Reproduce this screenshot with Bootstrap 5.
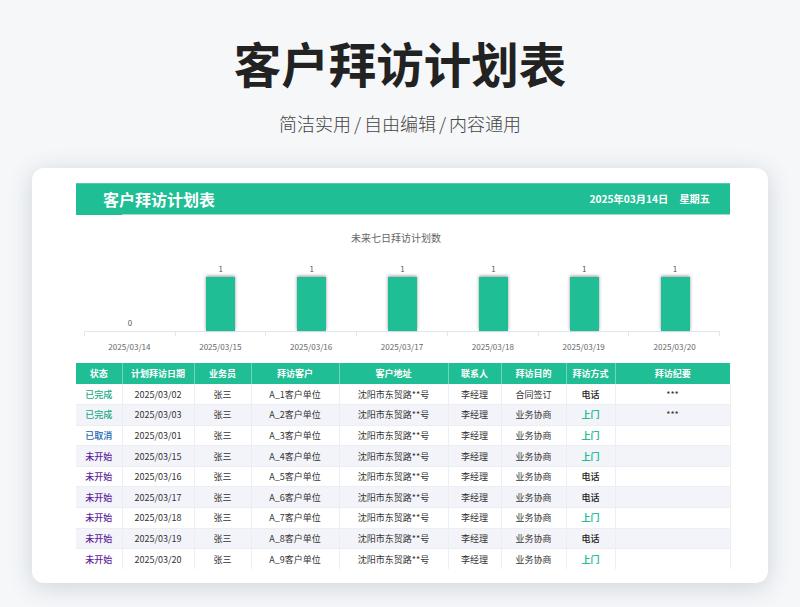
<!DOCTYPE html>
<html lang="zh-CN">
<head>
<meta charset="utf-8">
<title>客户拜访计划表</title>
<link href="https://cdn.jsdelivr.net/npm/bootstrap@5.3.0/dist/css/bootstrap.min.css" rel="stylesheet">
<style>
html,body{height:100%}
body{background:#f5f7f9;font-family:"Noto Sans CJK SC","Liberation Sans",sans-serif;overflow:hidden;color:#222}
.hero-title{font-size:47.5px;line-height:64px;font-weight:700;color:#222;margin:31px 0 0}
.hero-sub{font-size:18px;line-height:28px;color:#444;margin:14px 0 0;font-weight:300;word-spacing:-1px}
.sheet{width:736px;height:415px;margin:31px auto 0;background:#fff;border-radius:12px;box-shadow:0 4px 24px rgba(60,75,90,.2);padding:15px 38px 0 44px}
.band{height:32px;background:#1fbe94;color:#fff;font-weight:700;border-top:1px solid #4ccdab;border-bottom:1px solid #a9d8cb;position:relative}
.band::after{content:"";position:absolute;left:0;bottom:-1px;width:46px;height:1px;background:#1fbe94}
.band-name{font-size:16px;padding-left:27px}
.band-date{font-size:10.2px;padding-right:20px;word-spacing:9px}
.chart-title{font-size:10px;color:#666;text-align:center;line-height:14px;margin-top:16px;padding-right:14px}
.plot{height:78px;margin:9px 10px 0 8px;border-bottom:1px solid #e3e6ea}
.slot{flex:1 1 0;border-left:1px solid transparent}
.val{font-size:8px;line-height:10px;color:#555;text-align:center;margin-bottom:3px}
.pillar{width:29px;height:54px;background:#1fbe94;box-shadow:0 -1px 3px rgba(80,80,80,.6)}
.axis{margin:0 10px 0 8px;height:5px}
.tick{flex:1 1 0;border-left:1px solid #e3e6ea;height:4px}
.tick:last-child{border-right:1px solid #e3e6ea}
.dates{margin:4px 10px 0 8px;font-size:8.1px;line-height:12px;color:#666}
.dates div{flex:1 1 0;text-align:center}
.visits{table-layout:fixed;width:654px;margin:10px 0 0;font-size:9px;border-collapse:collapse}
.visits th{background:#1fbe94;color:#fff;font-weight:700;height:21px;padding:0;text-align:center;vertical-align:middle;border:0;border-right:1px solid #6fd6bb;line-height:1}
.visits th:last-child{border-right:0}
.visits td{height:20.6px;padding:0;text-align:center;vertical-align:middle;border:0;border-right:1px solid #eceef2;border-bottom:1px solid #eceef2;color:#333;line-height:1;background:#fff}
.visits tr:last-child td{border-bottom:0}
.visits tbody tr:nth-child(even) td{background:#f3f4f9}
.visits td.st-done{color:#1aa884;font-weight:500}
.visits td.st-off{color:#1464b0;font-weight:500}
.visits td.st-todo{color:#5f1f9c;font-weight:500}
.visits td.tel{color:#222;font-weight:500}
.visits td.door{color:#25b892;font-weight:700}
</style>
</head>
<body>
<h1 class="hero-title text-center">客户拜访计划表</h1>
<p class="hero-sub text-center">简洁实用 / 自由编辑 / 内容通用</p>
<main class="sheet">
  <div class="band d-flex justify-content-between align-items-center">
    <div class="band-name">客户拜访计划表</div>
    <div class="band-date">2025年03月14日 星期五</div>
  </div>
  <div class="chart-title">未来七日拜访计划数</div>
  <div class="plot d-flex">
    <div class="slot d-flex flex-column align-items-center justify-content-end"><div class="val">0</div></div>
    <div class="slot d-flex flex-column align-items-center justify-content-end"><div class="val">1</div><div class="pillar"></div></div>
    <div class="slot d-flex flex-column align-items-center justify-content-end"><div class="val">1</div><div class="pillar"></div></div>
    <div class="slot d-flex flex-column align-items-center justify-content-end"><div class="val">1</div><div class="pillar"></div></div>
    <div class="slot d-flex flex-column align-items-center justify-content-end"><div class="val">1</div><div class="pillar"></div></div>
    <div class="slot d-flex flex-column align-items-center justify-content-end"><div class="val">1</div><div class="pillar"></div></div>
    <div class="slot d-flex flex-column align-items-center justify-content-end"><div class="val">1</div><div class="pillar"></div></div>
  </div>
  <div class="axis d-flex"><div class="tick"></div><div class="tick"></div><div class="tick"></div><div class="tick"></div><div class="tick"></div><div class="tick"></div><div class="tick"></div></div>
  <div class="dates d-flex"><div>2025/03/14</div><div>2025/03/15</div><div>2025/03/16</div><div>2025/03/17</div><div>2025/03/18</div><div>2025/03/19</div><div>2025/03/20</div></div>
  <table class="visits">
    <colgroup><col width="46"><col width="72"><col width="57"><col width="88"><col width="109"><col width="53"><col width="65"><col width="49"><col width="115"></colgroup>
    <thead><tr><th>状态</th><th>计划拜访日期</th><th>业务员</th><th>拜访客户</th><th>客户地址</th><th>联系人</th><th>拜访目的</th><th>拜访方式</th><th>拜访纪要</th></tr></thead>
    <tbody>
      <tr><td class="st-done">已完成</td><td>2025/03/02</td><td>张三</td><td>A_1客户单位</td><td>沈阳市东贸路**号</td><td>李经理</td><td>合同签订</td><td class="tel">电话</td><td>***</td></tr>
      <tr><td class="st-done">已完成</td><td>2025/03/03</td><td>张三</td><td>A_2客户单位</td><td>沈阳市东贸路**号</td><td>李经理</td><td>业务协商</td><td class="door">上门</td><td>***</td></tr>
      <tr><td class="st-off">已取消</td><td>2025/03/01</td><td>张三</td><td>A_3客户单位</td><td>沈阳市东贸路**号</td><td>李经理</td><td>业务协商</td><td class="door">上门</td><td></td></tr>
      <tr><td class="st-todo">未开始</td><td>2025/03/15</td><td>张三</td><td>A_4客户单位</td><td>沈阳市东贸路**号</td><td>李经理</td><td>业务协商</td><td class="door">上门</td><td></td></tr>
      <tr><td class="st-todo">未开始</td><td>2025/03/16</td><td>张三</td><td>A_5客户单位</td><td>沈阳市东贸路**号</td><td>李经理</td><td>业务协商</td><td class="tel">电话</td><td></td></tr>
      <tr><td class="st-todo">未开始</td><td>2025/03/17</td><td>张三</td><td>A_6客户单位</td><td>沈阳市东贸路**号</td><td>李经理</td><td>业务协商</td><td class="tel">电话</td><td></td></tr>
      <tr><td class="st-todo">未开始</td><td>2025/03/18</td><td>张三</td><td>A_7客户单位</td><td>沈阳市东贸路**号</td><td>李经理</td><td>业务协商</td><td class="door">上门</td><td></td></tr>
      <tr><td class="st-todo">未开始</td><td>2025/03/19</td><td>张三</td><td>A_8客户单位</td><td>沈阳市东贸路**号</td><td>李经理</td><td>业务协商</td><td class="tel">电话</td><td></td></tr>
      <tr><td class="st-todo">未开始</td><td>2025/03/20</td><td>张三</td><td>A_9客户单位</td><td>沈阳市东贸路**号</td><td>李经理</td><td>业务协商</td><td class="door">上门</td><td></td></tr>
    </tbody>
  </table>
</main>
<script src="https://cdn.jsdelivr.net/npm/bootstrap@5.3.0/dist/js/bootstrap.bundle.min.js"></script>
</body>
</html>
